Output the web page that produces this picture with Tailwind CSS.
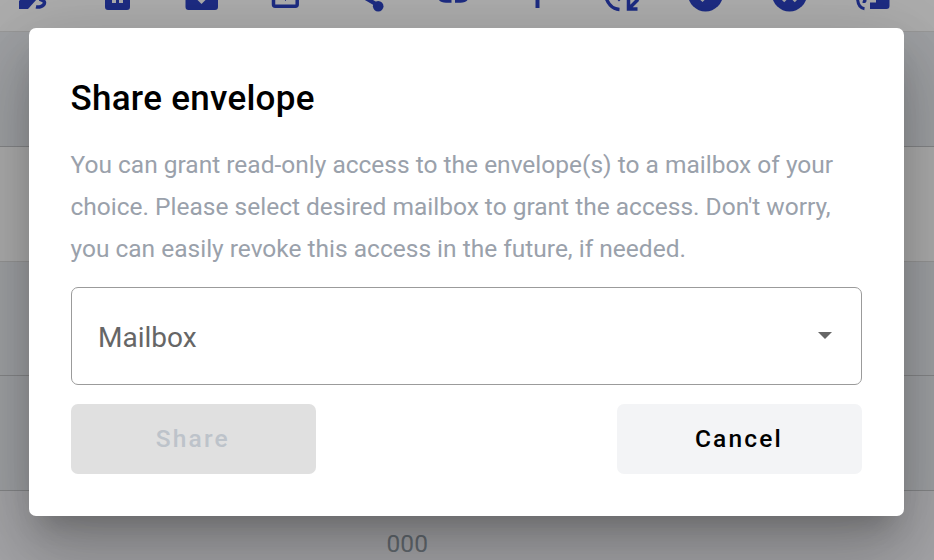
<!DOCTYPE html>
<html lang="en"><head><meta charset="utf-8"><title>Share envelope</title>
<script src="https://cdn.jsdelivr.net/npm/@tailwindcss/browser@4"></script></head>
<body class="h-[560px] w-[934px] overflow-hidden bg-[#adadad] font-[Roboto,sans-serif]">
<div class="flex h-[560px] flex-col overflow-hidden">
<div class="flex h-8 shrink-0 gap-[42px] overflow-hidden border-b border-[#999] pl-3 text-[#1d2c83] [&>svg]:-mt-[27px] [&>svg]:size-[42px] [&>svg]:shrink-0">
<svg viewBox="0 -27 42 42" fill="currentColor"><path d="M7 9V1L14-6l11 5-9 10z"/><path d="M24 6.800c3 .8 8.500-.8 8.500-4.300 0-2-2-2.500-5-3.500" fill="none" stroke="currentColor" stroke-width="3.500"/></svg>
<svg viewBox="0 -27 42 42" fill="currentColor"><path fill-rule="evenodd" d="M9-15h25V7q0 3-3 3H12q-3 0-3-3zM16-4v7h4v-7zm7 0v7h4v-7z"/></svg>
<svg viewBox="0 -27 42 42" fill="currentColor"><path fill-rule="evenodd" d="M5.500-15H38V7q0 3-3 3H8.500q-3 0-3-3zM14.500-3l7 7 7-7z"/></svg>
<svg viewBox="0 -27 42 42" fill="none" stroke="currentColor" stroke-width="3.500"><path d="M9.500-10V4.500q0 1.700 1.700 1.700h20.200q1.800 0 1.800-1.700V-10"/><path d="m17-5 4.500 5.500L26-5" stroke-width="1"/></svg>
<svg viewBox="0 -27 42 42" fill="currentColor"><circle cx="30.200" cy="6.200" r="5.300"/><path d="m12-8 18 11-2 3.500L10-4z"/></svg>
<svg viewBox="0 -27 42 42" fill="none" stroke="currentColor" stroke-width="3.500"><path d="M19.500 1H14Q7 1 7-6M23 1h5.500q7 0 7-7"/></svg>
<svg viewBox="0 -27 42 42" fill="currentColor"><path d="M19.500-20h4V8h-4z"/></svg>
<svg viewBox="0 -27 42 42" fill="none" stroke="currentColor" stroke-width="3.500"><path d="M5.500-5C7 3 12 9 19.500 9.500M28.500-1V9h9M29 8.500 38-.500"/><path d="m16-3 3 3 3-3" stroke-width="2"/></svg>
<svg viewBox="0 -27 42 42"><circle cx="21.500" cy="-6" r="17.500" fill="currentColor"/><path d="m13-5 5.500 5L29-11" fill="none" stroke="#a8a8a8" stroke-width="3"/></svg>
<svg viewBox="0 -27 42 42"><circle cx="21.500" cy="-6" r="17.500" fill="currentColor"/><path d="m15 1 13-13M28 1 15-12" fill="none" stroke="#a8a8a8" stroke-width="3.500"/></svg>
<svg viewBox="0 -27 42 42" fill="currentColor"><path d="M18 2.500h6V-6h13.500V6q0 3-3 3H18z"/><path d="M5.500-3C5.500 4 7.500 8 12.500 8.700M14.500 0q-2.500 0-2.500 3" fill="none" stroke="currentColor" stroke-width="3"/></svg>
</div>
<div class="h-[115px] shrink-0 border-b border-[#858688] bg-[#9fa1a4]"></div>
<div class="h-[115px] shrink-0 border-b border-[#969696] bg-[#adadad]"></div>
<div class="h-[114px] shrink-0 border-b border-[#858688] bg-[#9fa1a4]"></div>
<div class="h-[115px] shrink-0 border-b border-[#858688] bg-[#9fa1a4]"></div>
<div class="h-[115px] shrink-0 bg-[#a5a5a8] pl-[386.500px] pt-[38px] text-[24.500px] leading-[30px] tracking-[0.1px] text-[#636a70]">000</div>
</div>
<main class="absolute left-[29px] top-7 flex h-[488px] w-[875px] flex-col rounded-[7px] bg-white px-[42px] pt-[42px] shadow-[0_19px_26px_-12px_rgba(0,0,0,.2),0_42px_66px_5px_rgba(0,0,0,.14),0_16px_80px_14px_rgba(0,0,0,.12)]">
<h1 class="-ml-[0.5px] h-[74px] pt-px text-[35px] font-medium leading-[56px] tracking-[0.28px] text-black">Share envelope</h1>
<p class="-ml-[0.5px] h-[143px] whitespace-nowrap text-[24.5px] leading-[42px] text-[#9aa1ab]">You can grant read-only access to the envelope(s) to a mailbox of your<br>choice. Please select desired mailbox to grant the access. Don't worry,<br>you can easily revoke this access in the future, if needed.</p>
<div class="flex h-[98px] w-[791px] items-center justify-between rounded-[7px] border border-[#9b9b9b] pl-[26px] pr-[29px] text-[28px] text-[#666]"><span class="pt-[3px]">Mailbox</span><svg class="-mt-px h-[7px] w-[14px]" viewBox="0 0 14 7" fill="#666"><path d="M0 0h14L7 7z"/></svg></div>
<div class="mt-[19px] flex justify-between text-[24.5px] font-medium tracking-[2.19px]"><button class="h-[70px] w-[245px] rounded-[7px] bg-[#e0e0e0] pr-[1.5px] text-[#bdc3ca]">Share</button><button class="h-[70px] w-[245px] rounded-[7px] bg-[#f3f4f6] pr-px text-black">Cancel</button></div>
</main>
</body></html>
